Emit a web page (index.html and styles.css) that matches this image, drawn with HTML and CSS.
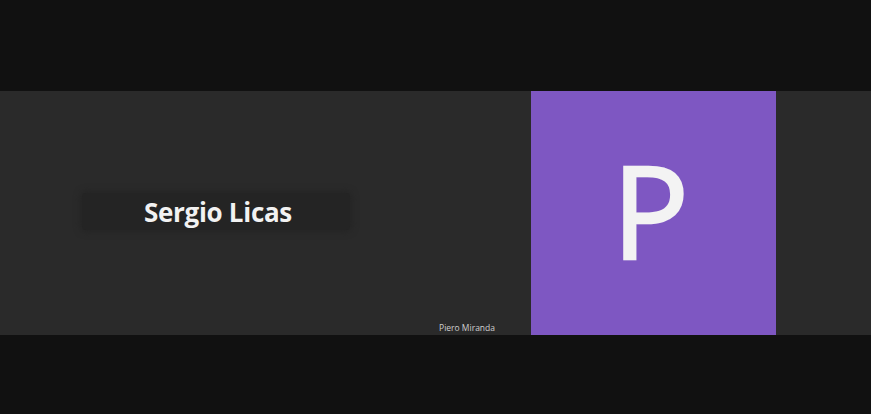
FILE: index.html
```html
<!DOCTYPE html>
<html>
<head>
<meta charset="utf-8">
<link rel="stylesheet" href="styles.css">
</head>
<body>
<div class="stage">
  <div class="tile-left">
    <div class="name-box"><span class="name">Sergio Licas</span></div>
    <div class="caption">Piero Miranda</div>
  </div>
  <div class="avatar"><span class="initial">P</span></div>
  <div class="filler"></div>
</div>
</body>
</html>
```

FILE: styles.css
```css
html, body {
  margin: 0;
  padding: 0;
  background: #111111;
  width: 871px;
  height: 414px;
  overflow: hidden;
}
.stage {
  margin-top: 91px;
  height: 244px;
  display: flex;
  background: #2a2a2a;
}
.tile-left {
  width: 531px;
  display: flex;
  flex-direction: column;
}
.name-box {
  margin-top: 102px;
  margin-left: 82px;
  width: 268px;
  height: 37px;
  background: #242424;
  border-radius: 4px;
  box-shadow: 0 0 6px 2px #252525;
  display: flex;
  align-items: center;
  justify-content: center;
}
.name {
  font-family: "Open Sans", sans-serif;
  font-weight: 700;
  font-size: 26px;
  color: #f2f2f2;
  letter-spacing: -0.3px;
  padding-left: 4px;
}
.caption {
  margin-top: auto;
  align-self: flex-end;
  margin-right: 36px;
  margin-bottom: 2px;
  font-family: "Open Sans", sans-serif;
  font-size: 8.5px;
  color: #cfcfcf;
}
.avatar {
  width: 245px;
  background: #7e57c2;
  display: flex;
  align-items: center;
  justify-content: center;
}
.initial {
  font-family: "Open Sans", sans-serif;
  font-weight: 400;
  font-size: 128px;
  line-height: 1;
  color: #f3f3f3;
  -webkit-text-stroke: 2.5px #f3f3f3;
  margin-left: -6px;
  margin-top: -6px;
}
.filler {
  flex: 1;
}
```
